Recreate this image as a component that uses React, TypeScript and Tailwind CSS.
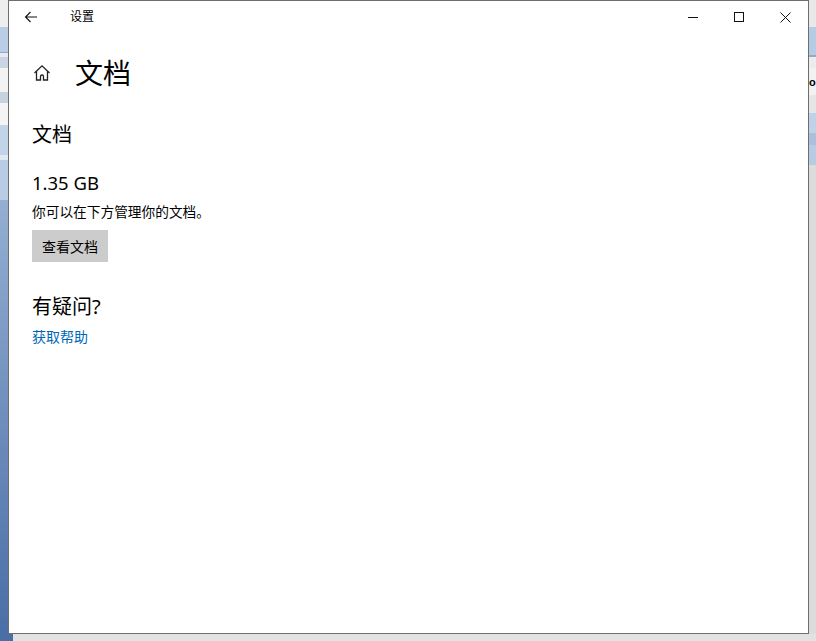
import React from "react";

const font = "font-['Segoe_UI','Noto_Sans','Noto_Sans_CJK_SC',sans-serif]";

const BackArrow = () => (
  <svg width="14" height="12" viewBox="0 0 14 12" fill="none" stroke="#111" strokeWidth="1.1">
    <path d="M13 6H1.5M6.5 1L1.5 6l5 5" />
  </svg>
);

const HomeIcon = () => (
  <svg width="18" height="18" viewBox="0 0 18 18" fill="none" stroke="#222" strokeWidth="1.3">
    <path d="M1.5 9L9 1.8 16.5 9" />
    <path d="M3.5 7.2V16h4v-3.5a1.5 1.5 0 0 1 3 0V16h4V7.2" />
  </svg>
);

const LeftStrip = () => (
  <div className="w-[8px] flex flex-col shrink-0">
    <div className="h-[27px] bg-[#eeeeee]" />
    <div className="h-[25px] bg-[#b9cde6]" />
    <div className="h-[1px] bg-[#95a9c4]" />
    <div className="h-[4px] bg-[#e6ebf1]" />
    <div className="h-[11px] bg-[#c9d5e2]" />
    <div className="h-[24px] bg-[#f3f3f3]" />
    <div className="h-[11px] bg-[#c6d2de]" />
    <div className="h-[22px] bg-[#f4f4f4]" />
    <div className="h-[30px] bg-[#c3d4e8]" />
    <div className="h-[5px] bg-[#e2e8ef]" />
    <div className="h-[40px] bg-[#b8cce4]" />
    <div className="flex-1 bg-gradient-to-b from-[#94afd2] to-[#4a6ea6]" />
  </div>
);

const RightStrip = () => (
  <div className="w-[7px] flex flex-col shrink-0 overflow-hidden">
    <div className="h-[27px] bg-[#e9e9e9]" />
    <div className="h-[28px] bg-[#b5cbe6]" />
    <div className="h-[2px] bg-[#97aac4]" />
    <div className="h-[11px] bg-[#ececec]" />
    <div className="h-[27px] bg-[#f2f2f2] flex items-center overflow-hidden">
      <span className="font-['Liberation_Sans',sans-serif] font-bold text-[11px] leading-[14px] text-black">
        o
      </span>
    </div>
    <div className="h-[18px] bg-[#e6e6e6]" />
    <div className="h-[20px] bg-[#c0d2e8]" />
    <div className="h-[12px] bg-[#aac0dc]" />
    <div className="h-[20px] bg-[#b7cbe3]" />
    <div className="flex-1 bg-[#dcdcdc]" />
  </div>
);

export default function App() {
  return (
    <div className={`w-[816px] h-[641px] flex flex-col overflow-hidden bg-[#dcdcdc] ${font}`}>
      <div className="flex h-[634px]">
        <LeftStrip />
        <div className="w-[801px] border border-[#6e6e6e] bg-white flex flex-col">
          {/* title bar */}
          <div className="h-[32px] flex items-center shrink-0">
            <div className="w-[44px] h-full flex items-center justify-center">
              <BackArrow />
            </div>
            <div className="ml-[17px] text-[12px] text-black">设置</div>
            <div className="ml-auto flex h-full">
              <div className="w-[46px] h-full flex items-center justify-center">
                <div className="w-[10px] h-[1px] bg-[#111]" />
              </div>
              <div className="w-[46px] h-full flex items-center justify-center">
                <div className="w-[10px] h-[10px] border border-[#111]" />
              </div>
              <div className="w-[46px] h-full flex items-center justify-center">
                <svg width="11" height="11" viewBox="0 0 11 11" stroke="#111" strokeWidth="1">
                  <path d="M0.5 0.5l10 10M10.5 0.5l-10 10" />
                </svg>
              </div>
            </div>
          </div>

          {/* content */}
          <div className="pl-[23px] flex flex-col">
            <div className="mt-[20px] h-[40px] flex items-center">
              <div className="w-[18px] ml-[1px] flex items-center">
                <HomeIcon />
              </div>
              <h1 className="ml-[24px] text-[28px] leading-[40px] text-black">文档</h1>
            </div>

            <h2 className="mt-[28px] text-[20px] leading-[28px] text-black">文档</h2>

            <div className="mt-[20px] text-[18.5px] leading-[28px] text-black">1.35 GB</div>
            <p className="mt-[5px] text-[13.7px] leading-[20px] text-black">
              你可以在下方管理你的文档。
            </p>
            <div>
              <button className="mt-[8px] h-[32px] px-[10px] bg-[#cccccc] text-[14px] text-black">
                查看文档
              </button>
            </div>

            <h2 className="mt-[31px] text-[20px] leading-[28px] text-black">有疑问?</h2>
            <a className="mt-[6px] text-[14px] leading-[20px] text-[#0067b8] w-fit">获取帮助</a>
          </div>
        </div>
        <RightStrip />
      </div>
      <div className="flex h-[7px]">
        <div className="w-[13px] bg-[#4a6ea6]" />
        <div className="flex-1 bg-[#e2e2e2]" />
      </div>
    </div>
  );
}
